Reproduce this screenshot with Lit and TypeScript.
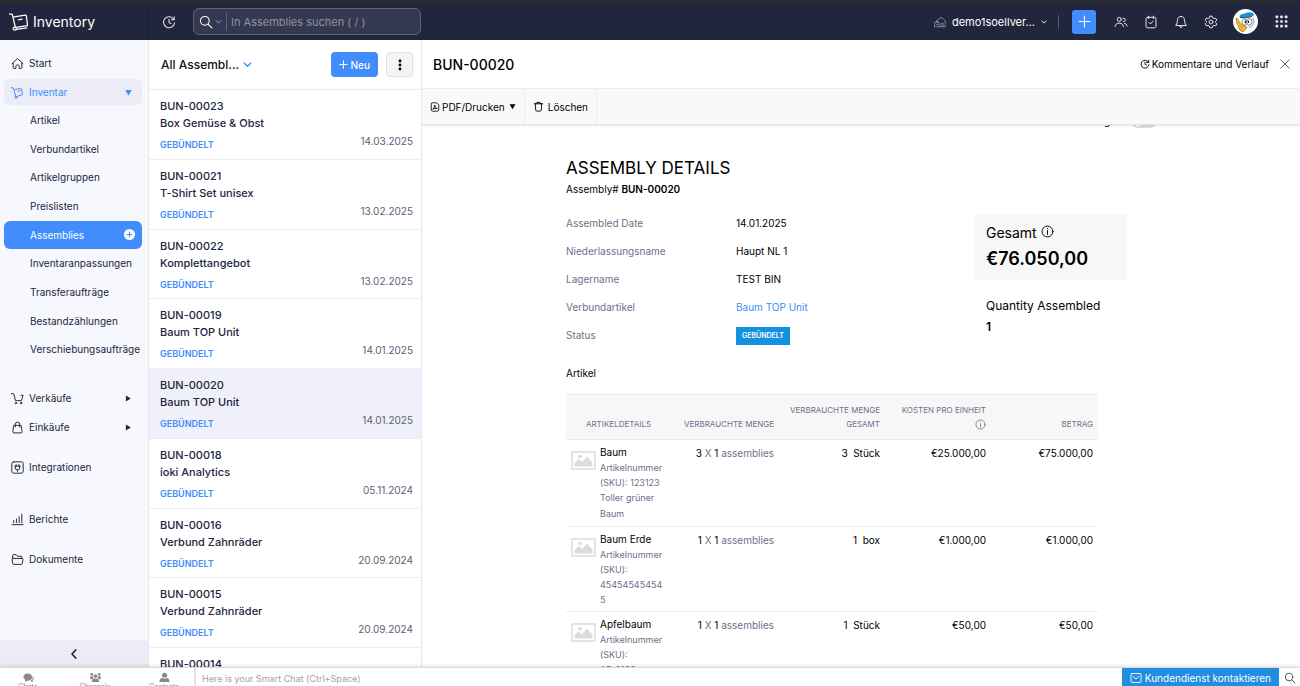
import { LitElement, html, css, svg, nothing } from "lit";
import { customElement, state } from "lit/decorators.js";

const icon = (body: unknown, size = 14, box = 24, width = 1.7) => html`<svg class="ico" width=${size} height=${size}
  viewBox="0 0 ${box} ${box}" fill="none" stroke="currentColor" stroke-width=${width} stroke-linecap="round" stroke-linejoin="round" aria-hidden="true">${body}</svg>`;

const glyph = {
  trolley: svg`<path d="M1 3l3.500.7L8.500 19M8 6.500l9.500-2q1.300-.3 1.500 1l2 9.500q.2 1.300-1 1.500L11.500 19M13 9.500l3.500-.7"/><circle cx="9" cy="20.800" r="1.900"/>`,
  logo: svg`<path d="M.5 2.500l3.700.6L8 19M6.500 6.200L20.500 4q1.200-.2 1.400.8l1.600 12.400-14.500 2.300M12 9.800l4.500-.8"/><circle cx="7.200" cy="21" r="1.900"/><path d="M9.500 22l13-2"/>`,
  home: svg`<path d="M2 12.300L11 3.600q1-1 2 0l9 8.700M4 11v8.500Q4 21 5.500 21H9v-4q0-2.500 3-2.500t3 2.500v4h3.500q1.500 0 1.500-1.500V11"/>`,
  cart: svg`<path d="M1 3h3q1 0 1.300 1l3 12h11l3-10h-4"/><circle cx="9" cy="20.500" r="1.400"/><circle cx="18.500" cy="20.500" r="1.400"/>`,
  bag: svg`<path d="M5.500 8h13l2 11.500q.3 2.500-1.700 2.500H5.200q-2 0-1.700-2.500zM8 11V6q0-4 4-4t4 4v5"/>`,
  plug: svg`<rect x="1.500" y="1.500" width="21" height="21" rx="3.500"/><path d="M7 9.500h10M8 9.500v3.500q0 3.500 4 3.500t4-3.500V9.500M9.500 6.500v3M14.500 6.500v3M12 16.500v2.500"/>`,
  bars: svg`<path d="M2 21.500h20M5 18v-4M10 18v-7M15 18V7M20 18V2"/>`,
  folder: svg`<path d="M3 10V4.500Q3 3 4.500 3h5L12 6h6.500Q20 6 20 7.500V10M3.500 10h17q1.800 0 1.500 1.800l-1 7.200q-.3 2-2.200 2H5.200q-1.900 0-2.200-2l-1-7.200Q1.700 10 3.500 10z"/>`,
  history: svg`<path d="M20.500 8A9.500 9.500 0 1 0 21.500 13.500M21 3v5.200h-5.200M12 7.500v5.500l3.500 1.500"/>`,
  search: svg`<circle cx="10" cy="10" r="7.500"/><path d="M15.500 15.500L22 22"/>`,
  chevron: svg`<path d="M3 8l9 8.500L21 8"/>`,
  left: svg`<path d="M15.500 4L8 12l7.500 8"/>`,
  plus: svg`<path d="M12 2v20M2 12h20"/>`,
  close: svg`<path d="M2 2l20 20M22 2L2 22"/>`,
  org: svg`<path d="M6 9l8-6.500L22.500 9v12.500H11M6 9v2M2 12.500h8v9H2zM4.500 12.500v-2h3v2M14 21.500v-7h4.500v7M5 17h2"/>`,
  people: svg`<circle cx="9" cy="7.500" r="3.500"/><path d="M2 20q0-6 7-6t7 6M15.500 5.500q4-.5 4 2.800 0 2.700-3 3M18 14q4.500 1 4.500 5"/>`,
  check: svg`<rect x="3.500" y="4" width="17" height="18" rx="2.500"/><path d="M8 2v4M16 2v4M8.500 13l2.500 2.500 4.500-5"/>`,
  bell: svg`<path d="M12 2.500q6 0 6 7 0 4.500 3 8.500H3q3-4 3-8.500 0-7 6-7zM9.500 18q0 3.500 2.500 3.500t2.500-3.500"/>`,
  gear: svg`<path d="M10 2h4l.8 3 2.200 1.200 3-.8 2 3.500-2.200 2.200v1.800l2.200 2.200-2 3.500-3-.8L14.800 19 14 22h-4l-.8-3L7 17.800l-3 .8-2-3.500 2.200-2.200v-1.800L2 8.900l2-3.500 3 .8L9.200 5z"/><circle cx="12" cy="12" r="3.300"/>`,
  pdf: svg`<path d="M15 2H6Q3 2 3 5v14q0 3 3 3h12q3 0 3-3V8zM7.500 17q4-4 4-9M7.500 16.500q5-2.500 9-1M11.500 9q0 4 5 6.500"/>`,
  trash: svg`<path d="M3 6h18M8.500 6V3h7v3M5 6l1 14q.2 2 2 2h8q1.800 0 2-2l1-14"/>`,
  info: svg`<circle cx="12" cy="12" r="10"/><path d="M12 10.500v7M12 6.500v.5"/>`,
  mail: svg`<rect x="2" y="3" width="20" height="18" rx="2"/><path d="M6 8.500l6 5.500 6-5.500"/>`,
};

const solid = (body: unknown, size: number) => html`<svg class="ico" width=${size} height=${size} viewBox="0 0 24 24" fill="currentColor" aria-hidden="true">${body}</svg>`;

const children = ["Artikel", "Verbundartikel", "Artikelgruppen", "Preislisten", "Assemblies",
  "Inventaranpassungen", "Transferaufträge", "Bestandzählungen", "Verschiebungsaufträge"];

const assemblies = [
  ["BUN-00023", "Box Gemüse & Obst", "14.03.2025"],
  ["BUN-00021", "T-Shirt Set unisex", "13.02.2025"],
  ["BUN-00022", "Komplettangebot", "13.02.2025"],
  ["BUN-00019", "Baum TOP Unit", "14.01.2025"],
  ["BUN-00020", "Baum TOP Unit", "14.01.2025"],
  ["BUN-00018", "ioki Analytics", "05.11.2024"],
  ["BUN-00016", "Verbund Zahnräder", "20.09.2024"],
  ["BUN-00015", "Verbund Zahnräder", "20.09.2024"],
  ["BUN-00014", "Verbund Zahnräder", "20.09.2024"],
];

const items = [
  { name: "Baum", sku: "123123", note: "Toller grüner Baum", qty: 3, unit: "Stück", cost: "€25.000,00", sum: "€75.000,00" },
  { name: "Baum Erde", sku: "454545454545", note: "", qty: 1, unit: "box", cost: "€1.000,00", sum: "€1.000,00" },
  { name: "Apfelbaum", sku: "AP\u20110103", note: "", qty: 1, unit: "Stück", cost: "€50,00", sum: "€50,00" },
];

const base = css`
  :host, * { box-sizing: border-box; }
  button, input { font: inherit; color: inherit; border: 0; padding: 0; margin: 0; background: none; }
  button { display: flex; align-items: center; white-space: nowrap; }
  a { color: inherit; text-decoration: none; }
  h1, h2, h3, p, ul, dl, dd { margin: 0; padding: 0; font-size: inherit; font-weight: inherit; }
  ul { list-style: none; }
  .ico { display: block; flex: none; }
`;

@customElement("top-bar")
class TopBar extends LitElement {
  static styles = [base, css`
    :host { display: flex; align-items: center; height: 40px; padding-top: 3px; padding-right: 12px;
      background: linear-gradient(#2b2a31 3px, #21263c 3px); color: #fff; }
    .brand { display: flex; align-items: center; gap: 5px; width: 149px; padding-left: 9px; height: 37px;
      font-size: 14px; border-right: 1px solid #1d2135; }
    .recent { margin: 0 17px 0 13px; color: #dfe1ea; }
    .search { display: flex; align-items: center; width: 228px; height: 27px; border: 1px solid #5c6178;
      border-radius: 6px; background: #353950; padding: 0 8px 0 5px; }
    .scope { gap: 2px; padding-right: 4px; height: 18px; border-right: 1px solid #5c6178; }
    .scope .ico:last-child { color: #408dfb; }
    .search input { flex: 1; min-width: 0; padding-left: 4px; outline: 0; font-size: 11px; }
    .search input::placeholder { color: #8d91a3; opacity: 1; }
    .tools { display: flex; align-items: center; margin-left: auto; color: #e4e6ee; }
    .org { gap: 6px; font-size: 11px; color: #fff; margin-right: 11px; }
    .org .ico:first-child { color: #8b8fa2; }
    .rule { width: 1px; height: 14px; background: #565a6e; margin-right: 13px; }
    .add { width: 24px; height: 24px; border-radius: 3px; background: #408dfb; color: #fff; justify-content: center; }
    .icons { display: flex; align-items: center; gap: 16px; margin-left: 18px; margin-right: 15px; }
    .avatar { margin-right: 17px; }
  `];
  render() {
    return html`
      <a class="brand" href="#">${icon(glyph.logo, 19, 24, 1.6)}<span>Inventory</span></a>
      <button class="recent" aria-label="Zuletzt verwendet">${icon(glyph.history, 14, 24, 1.8)}</button>
      <div class="search">
        <button class="scope" aria-label="Suchbereich">${icon(glyph.search, 14, 24, 1.8)}${icon(glyph.chevron, 7, 24, 3.5)}</button>
        <input type="text" aria-label="Suchen" placeholder="In Assemblies suchen ( / )">
      </div>
      <div class="tools">
        <button class="org">${icon(glyph.org, 12, 24, 1.7)}<span>demo1soellver...</span>${icon(glyph.chevron, 6, 24, 3.5)}</button>
        <span class="rule"></span>
        <button class="add" aria-label="Neu">${icon(glyph.plus, 13, 24, 2)}</button>
        <div class="icons">
          <button aria-label="Kontakte">${icon(glyph.people)}</button>
          <button aria-label="Aufgaben">${icon(glyph.check)}</button>
          <button aria-label="Mitteilungen">${icon(glyph.bell)}</button>
          <button aria-label="Einstellungen">${icon(glyph.gear)}</button>
        </div>
        <button class="avatar" aria-label="Profil">
          <svg class="ico" width="25" height="25" viewBox="0 0 25 25" aria-hidden="true">
            <circle cx="12.500" cy="12.500" r="12.500" fill="#fff"/>
            <path d="M6.500 7Q8 4.500 12 4.500 15 2.500 20 4q2 2-1 3.500L11 8.500 7 9z" fill="#1f8fd0"/>
            <path d="M7 8.500q5 1 12-1" fill="none" stroke="#174a75" stroke-width="1"/>
            <path d="M10.500 10q2.500-1.500 3 1.500t-1.500 5q-3-.5-3-3t1.500-3.500zM15.500 9.500q3.500-.5 3.500 3t-4 4q-1.500-1-1.200-3.500t1.700-3.500z" fill="#fff" stroke="#57606a" stroke-width=".8"/>
            <path d="M12.300 11.500v2.500M15.500 11.500v2.500" stroke="#222" stroke-width="1.200"/>
            <path d="M3 9q1.500-.5 2.500 2.500l3 4.500 5 1.500q1.500 1-1 3-2 3-4 2-2.500-1-3-5Q3 14 3 9z" fill="#f0b323" stroke="#8a6415" stroke-width=".5"/>
            <path d="M20 8.500q2.500 5-1 8.500l-3 2" fill="none" stroke="#8a919a" stroke-width=".9"/>
          </svg>
        </button>
        <button aria-label="Apps">${solid([1, 9.5, 18].flatMap(y => [1, 9.5, 18].map(x => svg`<rect x=${x} y=${y} width="5" height="5" rx="1.500"/>`)), 13)}</button>
      </div>`;
  }
}

@customElement("side-nav")
class SideNav extends LitElement {
  @state() active = "Assemblies";
  static styles = [base, css`
    :host { display: flex; flex-direction: column; background: #f7f7fe; border-right: 1px solid #e6e6ef;
      color: #21263c; font-size: 10px; min-height: 0; overflow: hidden; }
    nav { flex: 1; min-height: 0; overflow: hidden; padding: 10px 6px 0 4px; }
    .row { display: flex; align-items: center; gap: 5px; height: 26px; padding: 0 10px 0 7px; border-radius: 6px; }
    .row span { flex: 1; }
    .open { background: #ececf7; color: #408dfb; margin-top: 3px; }
    .sub { display: grid; grid-template-columns: minmax(0, 1fr); grid-auto-rows: 1fr; height: 258px; margin: 1px 0 21px; }
    .sub a { display: flex; align-items: center; justify-content: space-between; height: 28px; padding: 0 2px 0 26px; border-radius: 6px; white-space: nowrap; }
    .sub .active { background: #408dfb; color: #fff; padding-right: 7px; }
    .gap-s { margin-top: 3px; }
    .gap-m { margin-top: 14px; }
    .gap-l { margin-top: 26px; }
    .fold { height: 27px; background: #ececf7; justify-content: center; flex: none; }
  `];
  render() {
    const right = solid(svg`<path d="M3 2l17 10L3 22z"/>`, 7);
    return html`
      <nav>
        <a class="row" href="#">${icon(glyph.home, 13, 24, 1.8)}<span>Start</span></a>
        <a class="row open" href="#">${icon(glyph.trolley, 13, 24, 1.8)}<span>Inventar</span>${solid(svg`<path d="M1 3h22L12 22z"/>`, 7)}</a>
        <ul class="sub">
          ${children.map(c => html`<li><a href="#" class=${c === this.active ? "active" : ""} @click=${() => (this.active = c)}>${c}
            ${c === this.active ? html`<svg class="ico" width="11" height="11" viewBox="0 0 24 24" aria-hidden="true"><circle cx="12" cy="12" r="12" fill="#fff"/><path d="M12 6v12M6 12h12" stroke="#408dfb" stroke-width="2.500"/></svg>` : nothing}</a></li>`)}
        </ul>
        <a class="row" href="#">${icon(glyph.cart, 13, 24, 1.8)}<span>Verkäufe</span>${right}</a>
        <a class="row gap-s" href="#">${icon(glyph.bag, 13, 24, 1.8)}<span>Einkäufe</span>${right}</a>
        <a class="row gap-m" href="#">${icon(glyph.plug, 13, 24, 1.8)}<span>Integrationen</span></a>
        <a class="row gap-l" href="#">${icon(glyph.bars, 13, 24, 1.8)}<span>Berichte</span></a>
        <a class="row gap-m" href="#">${icon(glyph.folder, 13, 24, 1.8)}<span>Dokumente</span></a>
      </nav>
      <button class="fold" aria-label="Seitenleiste einklappen">${icon(glyph.left, 12, 24, 3.5)}</button>`;
  }
}

@customElement("assembly-list")
class AssemblyList extends LitElement {
  static styles = [base, css`
    :host { display: flex; flex-direction: column; background: #fff; border-right: 1px solid #e6e6ee; min-height: 0; overflow: hidden; }
    header { display: flex; align-items: center; height: 50px; flex: none; padding: 0 8px 0 12px; border-bottom: 1px solid #e9e9f0; }
    .view { gap: 4px; font-size: 12px; font-weight: 500; color: #111; margin-right: auto; }
    .view .ico { color: #408dfb; }
    .new { gap: 3px; height: 25px; padding: 0 8px; border-radius: 4px; background: #408dfb; color: #fff; font-size: 10px; font-weight: 500; }
    .more { width: 27px; height: 25px; margin-left: 8px; justify-content: center; border: 1px solid #dfdfe4; border-radius: 4px; background: #f4f4f5; color: #000; }
    ul { display: grid; grid-auto-rows: 1fr; height: 628px; flex: none; }
    li a { display: grid; grid-template-columns: 1fr auto; align-content: start; height: 100%; padding: 8px 8px 0 11px;
      border-bottom: 1px solid #ececf2; color: #21263c; font-size: 11px; line-height: 17px; font-weight: 500; }
    li .current { background: #f0f0fa; }
    .no, .name { grid-column: 1 / 3; }
    .status { font-size: 9px; font-weight: 600; color: #408dfb; margin-top: 4px; }
    .date { font-size: 10px; font-weight: 400; color: #5c6076; margin-top: 1px; }
  `];
  render() {
    return html`
      <header>
        <button class="view">All Assembl...${icon(glyph.chevron, 9, 24, 3.5)}</button>
        <button class="new">${icon(glyph.plus, 9, 24, 2.8)}Neu</button>
        <button class="more" aria-label="Mehr">${solid(svg`<circle cx="12" cy="4" r="2.800"/><circle cx="12" cy="12" r="2.800"/><circle cx="12" cy="20" r="2.800"/>`, 12)}</button>
      </header>
      <ul>${assemblies.map(([no, name, date]) => html`
        <li><a href="#" class=${no === "BUN-00020" ? "current" : ""}>
          <span class="no">${no}</span><span class="name">${name}</span>
          <span class="status">GEBÜNDELT</span><span class="date">${date}</span>
        </a></li>`)}</ul>`;
  }
}

@customElement("assembly-detail")
class AssemblyDetail extends LitElement {
  static styles = [base, css`
    :host { display: flex; flex-direction: column; background: #fff; color: #000; min-width: 0; min-height: 0; overflow: hidden; font-size: 10px; }
    header { display: flex; align-items: center; height: 48px; flex: none; padding: 0 10px 0 11px; }
    h1 { font-size: 14px; font-weight: 500; margin-right: auto; }
    .comments { gap: 2px; margin-right: 11px; }
    .close { color: #555; }
    .toolbar { display: flex; flex: none; height: 37px; background: #f9f9fb; border-top: 1px solid #ebebf0; border-bottom: 1px solid #e3e3e8;
      box-shadow: 0 1px 2px rgba(0, 0, 0, .1); z-index: 1; }
    .toolbar button { border-right: 1px solid #ebebf0; padding: 0 8px; }
    .toolbar .pdf { gap: 2px; }
    .pdf .ico:last-child { margin-left: 2px; }
    .trash { gap: 4px; }
    .scroll { flex: 1; min-height: 0; overflow: hidden; padding: 0 144px; }
    .viewopt { display: flex; align-items: flex-end; justify-content: flex-end; height: 3px; overflow: hidden; gap: 10px; }
    .viewopt label { line-height: 14px; }
    .viewopt input { appearance: none; width: 24px; height: 12px; border-radius: 6px; background: radial-gradient(circle at 6px 6px, #fff 4px, #dcdce0 5px); }
    h2 { font-size: 17px; line-height: 22px; margin-top: 29px; }
    .number { line-height: 16px; margin-top: 2px; }
    .number b { font-weight: 600; }
    .facts { display: flex; justify-content: space-between; padding-right: 29px; margin-top: 17px; }
    dl { display: grid; grid-template-columns: 170px auto; grid-auto-rows: 28px; align-content: start; line-height: 18px; }
    dt { color: #6c718a; }
    dd a { color: #408dfb; }
    .badge { display: inline-block; background: #1292e0; color: #fff; font-size: 7px; font-weight: 600; line-height: 18px; margin-top: 1px; padding: 0 6px; vertical-align: top; }
    .total { width: 152px; height: 66px; background: #f7f7f7; padding: 9px 11px; }
    .total p { display: flex; align-items: flex-start; gap: 4px; font-size: 14px; line-height: 20px; }
    .total .ico { margin-top: 2px; }
    .total strong { display: block; font-size: 18px; font-weight: 600; line-height: 31px; }
    .made { padding: 16px 11px 0; font-size: 12px; line-height: 20px; }
    .made strong { display: block; font-weight: 600; line-height: 22px; }
    h3 { line-height: 16px; margin-top: 11px; }
    table { width: 532px; margin-top: 13px; border-collapse: collapse; table-layout: fixed; }
    th { font-size: 8px; font-weight: 400; line-height: 14px; color: #6c718a; text-align: right; vertical-align: bottom; padding: 8px 5px; }
    thead tr { background: #f7f7f8; border-top: 1px solid #e8e8ec; border-bottom: 1px solid #e8e8ec; }
    th:first-child { text-align: center; }
    th .ico { margin: 2px 0 1px auto; }
    td { text-align: right; vertical-align: top; padding: 5px 5px 4px; line-height: 16px; }
    tbody tr { border-bottom: 1px solid #ececf0; }
    .item { display: grid; grid-template-columns: 25px 66px; gap: 4px; text-align: left; }
    .thumb { margin-top: 6px; }
    .name { line-height: 15px; }
    .meta { font-size: 9px; line-height: 15px; color: #6c718a; overflow-wrap: anywhere; padding-right: 2px; }
    .note { line-height: 16px; }
    .dim { color: #6c718a; }
    .c1 { width: 105px; } .c2 { width: 108px; } .c3 { width: 106px; } .c4 { width: 106px; }
  `];
  render() {
    return html`
      <header>
        <h1>BUN-00020</h1>
        <button class="comments">${icon(glyph.history, 10, 24, 2.2)}Kommentare und Verlauf</button>
        <button class="close" aria-label="Schließen">${icon(glyph.close, 10, 24, 2.2)}</button>
      </header>
      <div class="toolbar">
        <button class="pdf">${icon(glyph.pdf, 10, 24, 2)}PDF/Drucken${solid(svg`<path d="M2 4h20L12 21z"/>`, 7)}</button>
        <button class="trash">${icon(glyph.trash, 11, 24, 2)}Löschen</button>
      </div>
      <div class="scroll">
        <div class="viewopt"><label for="pdfview">PDF-Ansicht anzeigen</label><input id="pdfview" type="checkbox" role="switch"></div>
        <h2>ASSEMBLY DETAILS</h2>
        <p class="number">Assembly# <b>BUN-00020</b></p>
        <div class="facts">
          <dl>
            <dt>Assembled Date</dt><dd>14.01.2025</dd>
            <dt>Niederlassungsname</dt><dd>Haupt NL 1</dd>
            <dt>Lagername</dt><dd>TEST BIN</dd>
            <dt>Verbundartikel</dt><dd><a href="#">Baum TOP Unit</a></dd>
            <dt>Status</dt><dd><span class="badge">GEBÜNDELT</span></dd>
          </dl>
          <div>
            <div class="total"><p>Gesamt ${icon(glyph.info, 13, 24, 1.8)}</p><strong>€76.050,00</strong></div>
            <div class="made">Quantity Assembled<strong>1</strong></div>
          </div>
        </div>
        <h3>Artikel</h3>
        <table>
          <colgroup><col class="c1"><col class="c2"><col class="c3"><col class="c4"><col></colgroup>
          <thead><tr><th>ARTIKELDETAILS</th><th>VERBRAUCHTE MENGE</th><th>VERBRAUCHTE MENGE GESAMT</th><th>KOSTEN PRO EINHEIT ${icon(glyph.info, 11, 24, 1.8)}</th><th>BETRAG</th></tr></thead>
          <tbody>${items.map(i => html`<tr>
            <td><div class="item">
              <svg class="ico thumb" width="25" height="19" viewBox="0 0 25 19" aria-hidden="true"><rect x="1" y="1" width="23" height="17" fill="#fff" stroke="#dcdcdc" stroke-width="1.500"/><path d="M3.500 15.500v-3l4-4.500 3.500 3 5-5.500 5.500 6v4z" fill="#dcdcdc"/><circle cx="9" cy="5.500" r="1.800" fill="#dcdcdc"/></svg>
              <div><div class="name">${i.name}</div><div class="meta">Artikelnummer (SKU): ${i.sku}</div>${i.note ? html`<div class="meta note">${i.note}</div>` : nothing}</div>
            </div></td>
            <td>${i.qty} <span class="dim">X</span> 1 <span class="dim">assemblies</span></td>
            <td>${i.qty}&nbsp; ${i.unit}</td><td>${i.cost}</td><td>${i.sum}</td></tr>`)}</tbody>
        </table>
      </div>`;
  }
}

@customElement("chat-bar")
class ChatBar extends LitElement {
  static styles = [base, css`
    :host { display: flex; height: 19px; overflow: hidden; background: #fff; border-top: 1px solid #d9d9de; box-shadow: 0 -1px 4px rgba(0, 0, 0, .12); z-index: 2; color: #8a8a8e; }
    .tabs { display: grid; grid-template-columns: 56px 1fr 60px; align-items: start; width: 196px; padding-top: 4px; border-right: 2px solid #e4e4e8; flex: none; }
    .tabs button { flex-direction: column; align-items: center; font-size: 7px; line-height: 8px; }
    .smart { flex: 1; min-width: 0; padding-left: 6px; outline: 0; font-size: 9px; height: 21px; }
    .smart::placeholder { color: #a2a2a6; opacity: 1; }
    .help { gap: 3px; height: 20px; padding: 0 8px; background: #218ee0; color: #fff; font-size: 10px; }
    .find { padding: 0 4px 0 5px; height: 20px; color: #555; }
  `];
  render() {
    return html`
      <div class="tabs">
        <button>${solid(svg`<path d="M10 3c6 0 10 3 10 8s-4 8-10 8l-6 3 1-5C-3 11 2 3 10 3z"/><path d="M21 8c4 4 2 9 0 10l1 4-6-2 5-5z"/>`, 11)}Chats</button>
        <button>${solid(svg`<circle cx="4" cy="5" r="3"/><circle cx="20" cy="5" r="3"/><circle cx="12" cy="9" r="4"/><path d="M0 9h7v7H1zM17 9h7l-1 7h-6zM4 22q0-8 8-8t8 8z"/>`, 11)}Channels</button>
        <button>${solid(svg`<circle cx="12" cy="7" r="5.500"/><path d="M1 22q0-9 7-9 4 3 8 0 7 0 7 9z"/>`, 11)}Contacts</button>
      </div>
      <input class="smart" type="text" aria-label="Smart Chat" placeholder="Here is your Smart Chat (Ctrl+Space)">
      <button class="help">${icon(glyph.mail, 12, 24, 1.8)}Kundendienst kontaktieren</button>
      <button class="find" aria-label="Suchen">${icon(glyph.search, 12, 24, 2)}</button>`;
  }
}

@customElement("app-root")
class AppRoot extends LitElement {
  static styles = css`
    :host { display: grid; grid-template-rows: auto minmax(0, 1fr) auto; height: 100vh; overflow: hidden; font-family: Inter, "Liberation Sans", sans-serif; }
    main { display: grid; grid-template-columns: 149px 273px minmax(0, 1fr); grid-template-rows: minmax(0, 1fr); min-height: 0; overflow: hidden; }
  `;
  render() {
    return html`<top-bar></top-bar>
      <main><side-nav></side-nav><assembly-list></assembly-list><assembly-detail></assembly-detail></main>
      <chat-bar></chat-bar>`;
  }
}
